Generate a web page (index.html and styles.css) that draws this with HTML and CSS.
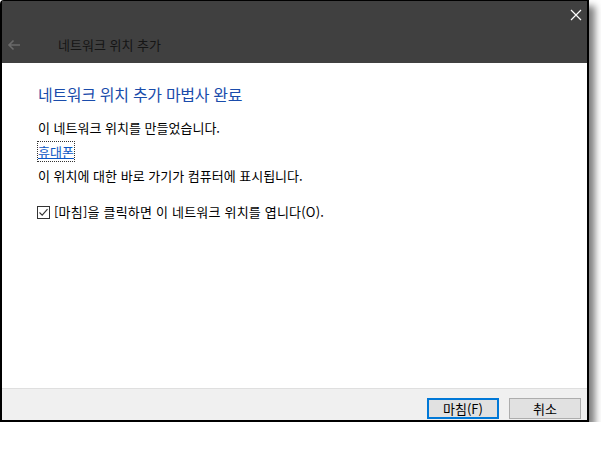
FILE: index.html
```html
<!DOCTYPE html>
<html lang="ko">
<head>
  <meta charset="UTF-8">
  <title>네트워크 위치 추가</title>
  <link rel="stylesheet" href="styles.css">
</head>
<body>

  <!-- Wizard window -->
  <div class="window">
    <div class="titlebar">
      <div class="caption">
        <svg class="close" width="12" height="12" viewBox="0 0 12 12">
          <path d="M1 1 L11 11 M11 1 L1 11" stroke="#fff" stroke-width="1.2" fill="none"/>
        </svg>
      </div>
      <div class="nav">
        <svg class="back" width="14" height="12" viewBox="0 0 14 12">
          <path d="M13 6 H2 M6.5 1.5 L2 6 L6.5 10.5" stroke="#6a6a6a" stroke-width="1.6" fill="none"/>
        </svg>
        <span class="nav-title">네트워크 위치 추가</span>
      </div>
    </div>

    <div class="content">
      <h1 class="instruction">네트워크 위치 추가 마법사 완료</h1>
      <p class="line">이 네트워크 위치를 만들었습니다.</p>
      <p class="line"><a class="link" href="#">휴대폰</a></p>
      <p class="line">이 위치에 대한 바로 가기가 컴퓨터에 표시됩니다.</p>
      <label class="check-row">
        <span class="checkbox">
          <svg width="11" height="11" viewBox="0 0 11 11">
            <path d="M1.5 5.5 L4.2 8.2 L9.5 2.2" stroke="#333" stroke-width="1.1" fill="none"/>
          </svg>
        </span>
        [마침]을 클릭하면 이 네트워크 위치를 엽니다(O).
      </label>
    </div>

    <div class="footer">
      <button class="btn primary">마침(F)</button>
      <button class="btn">취소</button>
    </div>
  </div>

</body>
</html>
```

FILE: styles.css
```css
/* Reset */
* { margin: 0; padding: 0; box-sizing: border-box; }
body {
  background: #fff;
  font-family: "Noto Sans CJK KR", "Noto Sans", sans-serif;
  font-size: 13px;
  color: #000;
}

/* Window frame */
.window {
  width: 589px;
  height: 422px;
  border: 2px solid #000;
  border-top-width: 1px;
  border-top-left-radius: 4px;
  background: #fff;
  box-shadow: 6px 6px 7px rgba(0, 0, 0, 0.5);
  display: flex;
  flex-direction: column;
}

/* Dark title area */
.titlebar {
  height: 62px;
  background: #404040;
  display: flex;
  flex-direction: column;
}
.caption {
  height: 27px;
  display: flex;
  justify-content: flex-end;
  align-items: center;
  padding-right: 5px;
}
.nav {
  height: 35px;
  display: flex;
  align-items: center;
  padding-left: 5px;
  padding-bottom: 2px;
}
.back { margin-right: 37px; }
.nav-title {
  color: #151515;
  font-size: 13px;
}

/* Wizard body */
.content {
  flex: 1;
  padding: 20px 0 0 36px;
}
.instruction {
  font-size: 16px;
  font-weight: normal;
  letter-spacing: -0.3px;
  color: #1a4cab;
  line-height: 22px;
  margin-bottom: 15px;
}
.line {
  line-height: 16px;
  margin-bottom: 8px;
}
.link {
  color: #0b56c4;
  text-decoration: underline;
  outline: 1px dotted #333;
  outline-offset: 0;
}
.check-row {
  display: flex;
  align-items: center;
  line-height: 16px;
  margin-top: 20px;
  letter-spacing: 0.2px;
}
.checkbox {
  width: 13px;
  height: 13px;
  border: 1px solid #333;
  background: #fff;
  display: flex;
  align-items: center;
  justify-content: center;
  margin-left: -1px;
  margin-right: 4px;
}

/* Button bar */
.footer {
  height: 32px;
  background: #f0f0f0;
  border-top: 1px solid #dfdfdf;
  display: flex;
  justify-content: flex-end;
  gap: 10px;
  padding: 9px 6px 0 0;
}
.btn {
  width: 72px;
  height: 21px;
  background: #e1e1e1;
  border: 1px solid #adadad;
  font-family: inherit;
  font-size: 13px;
  line-height: 17px;
  color: #000;
}
.btn.primary {
  border: 2px solid #0078d7;
}
```
